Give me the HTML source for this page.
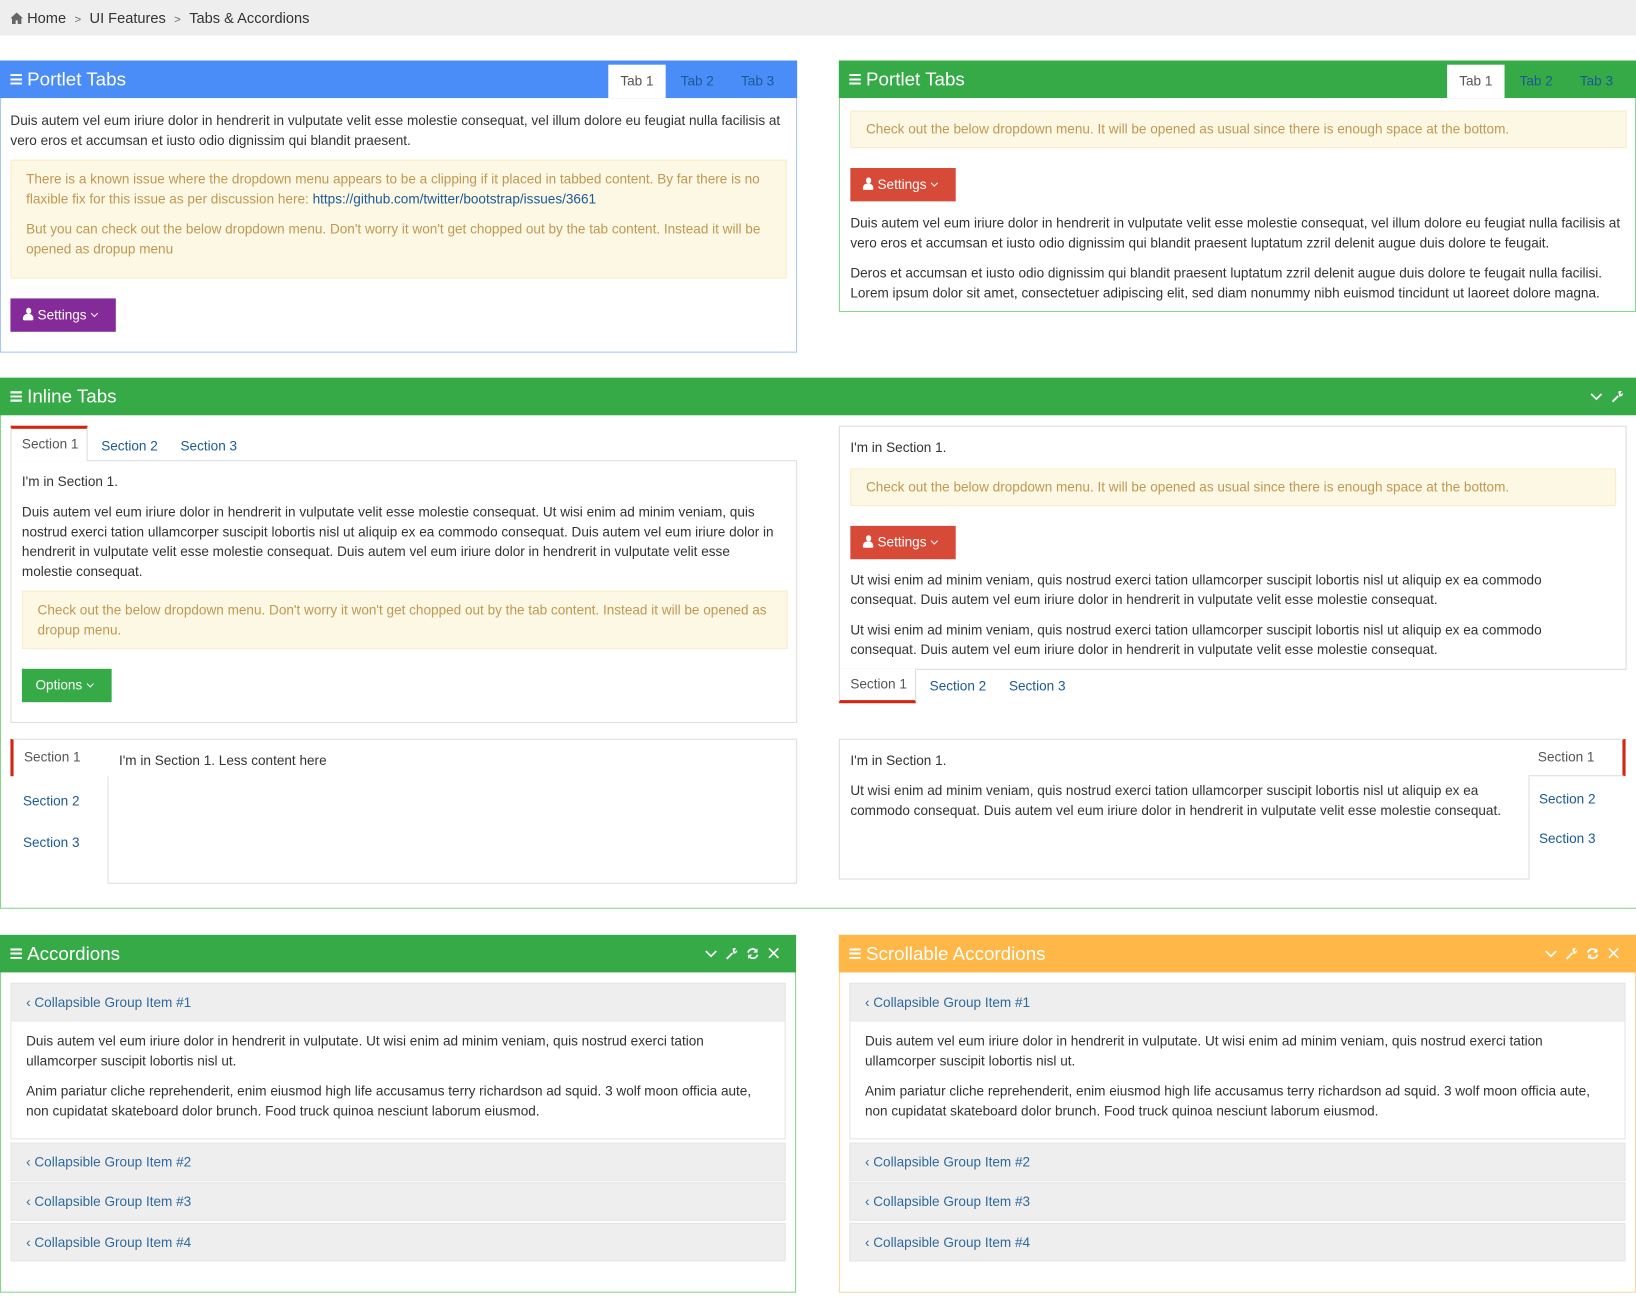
<!DOCTYPE html>
<html><head><meta charset="utf-8">
<style>
*{box-sizing:border-box;margin:0;padding:0}
html,body{width:1636px;height:1298px;overflow:hidden;background:#fff}
#w{position:absolute;left:0;top:0;width:1568px;height:1244px;transform:scale(1.04337);transform-origin:0 0;font-family:"Liberation Sans",sans-serif;font-size:13px;color:#333;line-height:19px}
.abs{position:absolute}
.bc{left:0;top:0;width:1568px;height:34px;background:#eee;padding:8px 10px;font-size:14px;color:#333}
.bc span{color:#666;margin:0 8px;font-size:11px}
.port{position:absolute;border:1px solid}
.hd{position:absolute;left:-1px;right:-1px;top:-1px;height:36px;color:#fff;font-size:18px;line-height:36px;padding-left:10px}
.hd .bars{display:inline-block;width:11px;height:10px;position:relative;margin-right:5px;vertical-align:1px;background:linear-gradient(#fff 0 2px,transparent 2px 4px,#fff 4px 6px,transparent 6px 8px,#fff 8px 10px)}
.tabs{position:absolute;right:12px;top:4px;height:32px;font-size:13px}
.tabs a{float:left;height:32px;line-height:32px;padding:0 12px;color:#1c5a96;text-decoration:none;margin-left:2px}
.tabs a.on{background:#fff;color:#555}
.alert{position:absolute;background:#fcf8e3;border:1px solid #faebcc;color:#c09853;padding:0 14px}
.btn{position:absolute;height:32px;line-height:32px;color:#fff;font-size:13px;padding-left:12px}
.btn i{display:inline-block;width:10px;height:12px;position:relative;vertical-align:-1px;margin-right:4px}
.btn i:before{content:"";position:absolute;left:2.5px;top:0;width:5px;height:6px;border-radius:50%;background:#fff}
.btn i:after{content:"";position:absolute;left:0;bottom:0;width:10px;height:6px;border-radius:4px 4px 1px 1px;background:#fff}
.btn b{display:inline-block;width:5px;height:5px;border-right:1.5px solid #fff;border-bottom:1.5px solid #fff;transform:rotate(45deg);margin-left:5px;vertical-align:3px}
p{margin:0}
.t{position:absolute}
.box{position:absolute;border:1px solid #ddd}
.stab{position:absolute;font-size:13px;color:#1c5a96}
.acth{position:absolute;background:#eee;border:1px solid #e5e5e5;color:#2e6a9e;font-size:13px;line-height:36px;padding-left:14px}
.acb{position:absolute;border:1px solid #e5e5e5;border-top:none;background:#fff}
.icons{position:absolute;top:0;height:36px}
.icons svg{position:absolute;top:12px}
a.lk{color:#1c5a96;text-decoration:none}
</style></head><body><div id="w">

<div class="abs bc"><svg width="12" height="11" viewBox="0 0 12 11" style="vertical-align:-1px;margin-right:4px"><path d="M6 0L0 5.5h1.5V11h3.5V7.5h2V11h3.5V5.5H12z" fill="#666"/></svg>Home<span>&gt;</span>UI Features<span>&gt;</span>Tabs &amp; Accordions</div>

<div class="port" style="left:0;top:58px;width:764px;height:280px;border-color:#a9c7f5">
 <div class="hd" style="background:#4b8df8"><span class="bars"></span>Portlet Tabs
  <div class="tabs" style="right:10px"><a class="on" style="padding:0 12px">Tab 1</a><a>Tab 2</a><a>Tab 3</a></div></div>
 <div class="t" style="left:9px;top:47px;width:745px">Duis autem vel eum iriure dolor in hendrerit in vulputate velit esse molestie consequat, vel illum dolore eu feugiat nulla facilisis at vero eros et accumsan et iusto odio dignissim qui blandit praesent.</div>
 <div class="alert" style="left:9px;top:94px;width:744px;height:114px;padding-top:8px"><p>There is a known issue where the dropdown menu appears to be a clipping if it placed in tabbed content. By far there is no flaxible fix for this issue as per discussion here: <a class="lk">https://github.com/twitter/bootstrap/issues/3661</a></p><p style="margin-top:10px">But you can check out the below dropdown menu. Don't worry it won't get chopped out by the tab content. Instead it will be opened as dropup menu</p></div>
 <div class="btn" style="left:9px;top:227px;width:101px;background:#852b99"><i></i>Settings<b></b></div>
</div>

<div class="port" style="left:804px;top:58px;width:764px;height:241px;border-color:#86d58f">
 <div class="hd" style="background:#35aa47"><span class="bars"></span>Portlet Tabs
  <div class="tabs" style="right:10px"><a class="on">Tab 1</a><a>Tab 2</a><a>Tab 3</a></div></div>
 <div class="alert" style="left:10px;top:47px;width:744px;height:36px;line-height:34px">Check out the below dropdown menu. It will be opened as usual since there is enough space at the bottom.</div>
 <div class="btn" style="left:10px;top:102px;width:101px;background:#d84a38"><i></i>Settings<b></b></div>
 <div class="t" style="left:10px;top:145px;width:750px">Duis autem vel eum iriure dolor in hendrerit in vulputate velit esse molestie consequat, vel illum dolore eu feugiat nulla facilisis at vero eros et accumsan et iusto odio dignissim qui blandit praesent luptatum zzril delenit augue duis dolore te feugait.</div>
 <div class="t" style="left:10px;top:193px;width:750px">Deros et accumsan et iusto odio dignissim qui blandit praesent luptatum zzril delenit augue duis dolore te feugait nulla facilisi. Lorem ipsum dolor sit amet, consectetuer adipiscing elit, sed diam nonummy nibh euismod tincidunt ut laoreet dolore magna.</div>
</div>

<div class="port" style="left:0;top:362px;width:1570px;height:509px;border-color:#86d58f">
 <div class="hd" style="background:#35aa47"><span class="bars"></span>Inline Tabs
  <div class="icons" style="right:10px;width:40px">
   <svg style="left:4px" width="12" height="12" viewBox="0 0 12 12"><path d="M1 3.5l5 5 5-5" stroke="#fff" stroke-width="1.6" fill="none"/></svg>
   <svg style="left:24px" width="12" height="12" viewBox="0 0 12 12"><path d="M1.5 11L7 5.5" stroke="#fff" stroke-width="1.8"/><path d="M7 1.5a3 3 0 0 1 3.5-.5L9 3v1h1l1.5-1.5A3 3 0 0 1 8 6z" fill="#fff"/></svg>
  </div></div>
 <div class="abs" style="left:9px;top:45px;width:74px;height:34px;border:1px solid #ddd;border-bottom:none;border-top:3px solid #d12610;background:#fff;z-index:2;font-size:13px;color:#555;line-height:30px;padding-left:10px">Section 1</div>
 <div class="stab" style="left:96px;top:55px">Section 2</div>
 <div class="stab" style="left:172px;top:55px">Section 3</div>
 <div class="box" style="left:9px;top:78px;width:754px;height:252px">
  <div class="t" style="left:10px;top:10px">I'm in Section 1.</div>
  <div class="t" style="left:10px;top:39px;width:728px">Duis autem vel eum iriure dolor in hendrerit in vulputate velit esse molestie consequat. Ut wisi enim ad minim veniam, quis nostrud exerci tation ullamcorper suscipit lobortis nisl ut aliquip ex ea commodo consequat. Duis autem vel eum iriure dolor in hendrerit in vulputate velit esse molestie consequat. Duis autem vel eum iriure dolor in hendrerit in vulputate velit esse molestie consequat.</div>
  <div class="alert" style="left:10px;top:124px;width:734px;height:56px;padding-top:8px">Check out the below dropdown menu. Don't worry it won't get chopped out by the tab content. Instead it will be opened as dropup menu.</div>
  <div class="btn" style="left:10px;top:199px;width:86px;background:#35aa47;padding-left:13px">Options<b></b></div>
 </div>
 <div class="box" style="left:803px;top:45px;width:755px;height:234px">
  <div class="t" style="left:10px;top:10px">I'm in Section 1.</div>
  <div class="alert" style="left:10px;top:40px;width:734px;height:36px;line-height:34px">Check out the below dropdown menu. It will be opened as usual since there is enough space at the bottom.</div>
  <div class="btn" style="left:10px;top:95px;width:101px;background:#d84a38"><i></i>Settings<b></b></div>
  <div class="t" style="left:10px;top:137px;width:700px">Ut wisi enim ad minim veniam, quis nostrud exerci tation ullamcorper suscipit lobortis nisl ut aliquip ex ea commodo consequat. Duis autem vel eum iriure dolor in hendrerit in vulputate velit esse molestie consequat.</div>
  <div class="t" style="left:10px;top:185px;width:700px">Ut wisi enim ad minim veniam, quis nostrud exerci tation ullamcorper suscipit lobortis nisl ut aliquip ex ea commodo consequat. Duis autem vel eum iriure dolor in hendrerit in vulputate velit esse molestie consequat.</div>
 </div>
 <div class="abs" style="left:803px;top:278px;width:74px;height:33px;border:1px solid #ddd;border-top:none;border-bottom:3px solid #d12610;background:#fff;z-index:2;font-size:13px;color:#555;line-height:30px;padding-left:10px">Section 1</div>
 <div class="stab" style="left:890px;top:285px">Section 2</div>
 <div class="stab" style="left:966px;top:285px">Section 3</div>
 <div class="box" style="left:102px;top:345px;width:661px;height:139px">
  <div class="t" style="left:10px;top:10px">I'm in Section 1. Less content here</div></div>
 <div class="abs" style="left:9px;top:345px;width:94px;height:36px;border-top:1px solid #ddd;border-left:3px solid #d12610;background:#fff;font-size:13px;color:#555;line-height:34px;padding-left:10px">Section 1</div>
 <div class="stab" style="left:21px;top:395px">Section 2</div>
 <div class="stab" style="left:21px;top:435px">Section 3</div>
 <div class="box" style="left:803px;top:345px;width:662px;height:135px">
  <div class="t" style="left:10px;top:10px">I'm in Section 1.</div>
  <div class="t" style="left:10px;top:39px;width:645px">Ut wisi enim ad minim veniam, quis nostrud exerci tation ullamcorper suscipit lobortis nisl ut aliquip ex ea commodo consequat. Duis autem vel eum iriure dolor in hendrerit in vulputate velit esse molestie consequat.</div></div>
 <div class="abs" style="left:1464px;top:345px;width:93px;height:36px;border-top:1px solid #ddd;border-right:3px solid #d12610;border-bottom:1px solid #ddd;background:#fff;font-size:13px;color:#555;line-height:34px;padding-left:9px">Section 1</div>
 <div class="stab" style="left:1474px;top:393px">Section 2</div>
 <div class="stab" style="left:1474px;top:431px">Section 3</div>
</div>

<div class="port" style="left:0;top:896px;width:763px;height:343px;border-color:#86d58f">
 <div class="hd" style="background:#35aa47"><span class="bars"></span>Accordions
  <div class="icons" style="right:8px;width:80px">
   <svg style="left:0" width="13" height="12" viewBox="0 0 12 12"><path d="M1 3.5l5 5 5-5" stroke="#fff" stroke-width="1.6" fill="none"/></svg>
   <svg style="left:20px" width="12" height="12" viewBox="0 0 12 12"><path d="M1.5 11L7 5.5" stroke="#fff" stroke-width="1.8"/><path d="M7 1.5a3 3 0 0 1 3.5-.5L9 3v1h1l1.5-1.5A3 3 0 0 1 8 6z" fill="#fff"/></svg>
   <svg style="left:40px" width="13" height="12" viewBox="0 0 13 12"><path d="M2 5a4.5 4.5 0 0 1 8-1.5M11 7a4.5 4.5 0 0 1-8 1.5" stroke="#fff" stroke-width="1.7" fill="none"/><path d="M11 1v4H7zM2 11V7h4z" fill="#fff"/></svg>
   <svg style="left:61px" width="11" height="11" viewBox="0 0 11 11"><path d="M1 1l9 9M10 1l-9 9" stroke="#fff" stroke-width="1.5"/></svg>
  </div></div>
 <div class="acth" style="left:9px;top:45px;width:743px;height:37px">‹ Collapsible Group Item #1</div>
 <div class="acb" style="left:9px;top:82px;width:743px;height:113px">
  <div class="t" style="left:14px;top:9px;width:715px">Duis autem vel eum iriure dolor in hendrerit in vulputate. Ut wisi enim ad minim veniam, quis nostrud exerci tation ullamcorper suscipit lobortis nisl ut.</div>
  <div class="t" style="left:14px;top:57px;width:715px">Anim pariatur cliche reprehenderit, enim eiusmod high life accusamus terry richardson ad squid. 3 wolf moon officia aute, non cupidatat skateboard dolor brunch. Food truck quinoa nesciunt laborum eiusmod.</div></div>
 <div class="acth" style="left:9px;top:198px;width:743px;height:37px">‹ Collapsible Group Item #2</div>
 <div class="acth" style="left:9px;top:236px;width:743px;height:37px">‹ Collapsible Group Item #3</div>
 <div class="acth" style="left:9px;top:275px;width:743px;height:37px">‹ Collapsible Group Item #4</div>
</div>

<div class="port" style="left:804px;top:896px;width:764px;height:343px;border-color:#fdd79f">
 <div class="hd" style="background:#ffb848"><span class="bars"></span>Scrollable Accordions
  <div class="icons" style="right:8px;width:80px">
   <svg style="left:0" width="13" height="12" viewBox="0 0 12 12"><path d="M1 3.5l5 5 5-5" stroke="#fff" stroke-width="1.6" fill="none"/></svg>
   <svg style="left:20px" width="12" height="12" viewBox="0 0 12 12"><path d="M1.5 11L7 5.5" stroke="#fff" stroke-width="1.8"/><path d="M7 1.5a3 3 0 0 1 3.5-.5L9 3v1h1l1.5-1.5A3 3 0 0 1 8 6z" fill="#fff"/></svg>
   <svg style="left:40px" width="13" height="12" viewBox="0 0 13 12"><path d="M2 5a4.5 4.5 0 0 1 8-1.5M11 7a4.5 4.5 0 0 1-8 1.5" stroke="#fff" stroke-width="1.7" fill="none"/><path d="M11 1v4H7zM2 11V7h4z" fill="#fff"/></svg>
   <svg style="left:61px" width="11" height="11" viewBox="0 0 11 11"><path d="M1 1l9 9M10 1l-9 9" stroke="#fff" stroke-width="1.5"/></svg>
  </div></div>
 <div class="acth" style="left:9px;top:45px;width:744px;height:37px">‹ Collapsible Group Item #1</div>
 <div class="acb" style="left:9px;top:82px;width:744px;height:113px">
  <div class="t" style="left:14px;top:9px;width:715px">Duis autem vel eum iriure dolor in hendrerit in vulputate. Ut wisi enim ad minim veniam, quis nostrud exerci tation ullamcorper suscipit lobortis nisl ut.</div>
  <div class="t" style="left:14px;top:57px;width:715px">Anim pariatur cliche reprehenderit, enim eiusmod high life accusamus terry richardson ad squid. 3 wolf moon officia aute, non cupidatat skateboard dolor brunch. Food truck quinoa nesciunt laborum eiusmod.</div></div>
 <div class="acth" style="left:9px;top:198px;width:744px;height:37px">‹ Collapsible Group Item #2</div>
 <div class="acth" style="left:9px;top:236px;width:744px;height:37px">‹ Collapsible Group Item #3</div>
 <div class="acth" style="left:9px;top:275px;width:744px;height:37px">‹ Collapsible Group Item #4</div>
</div>

</div></body></html>
